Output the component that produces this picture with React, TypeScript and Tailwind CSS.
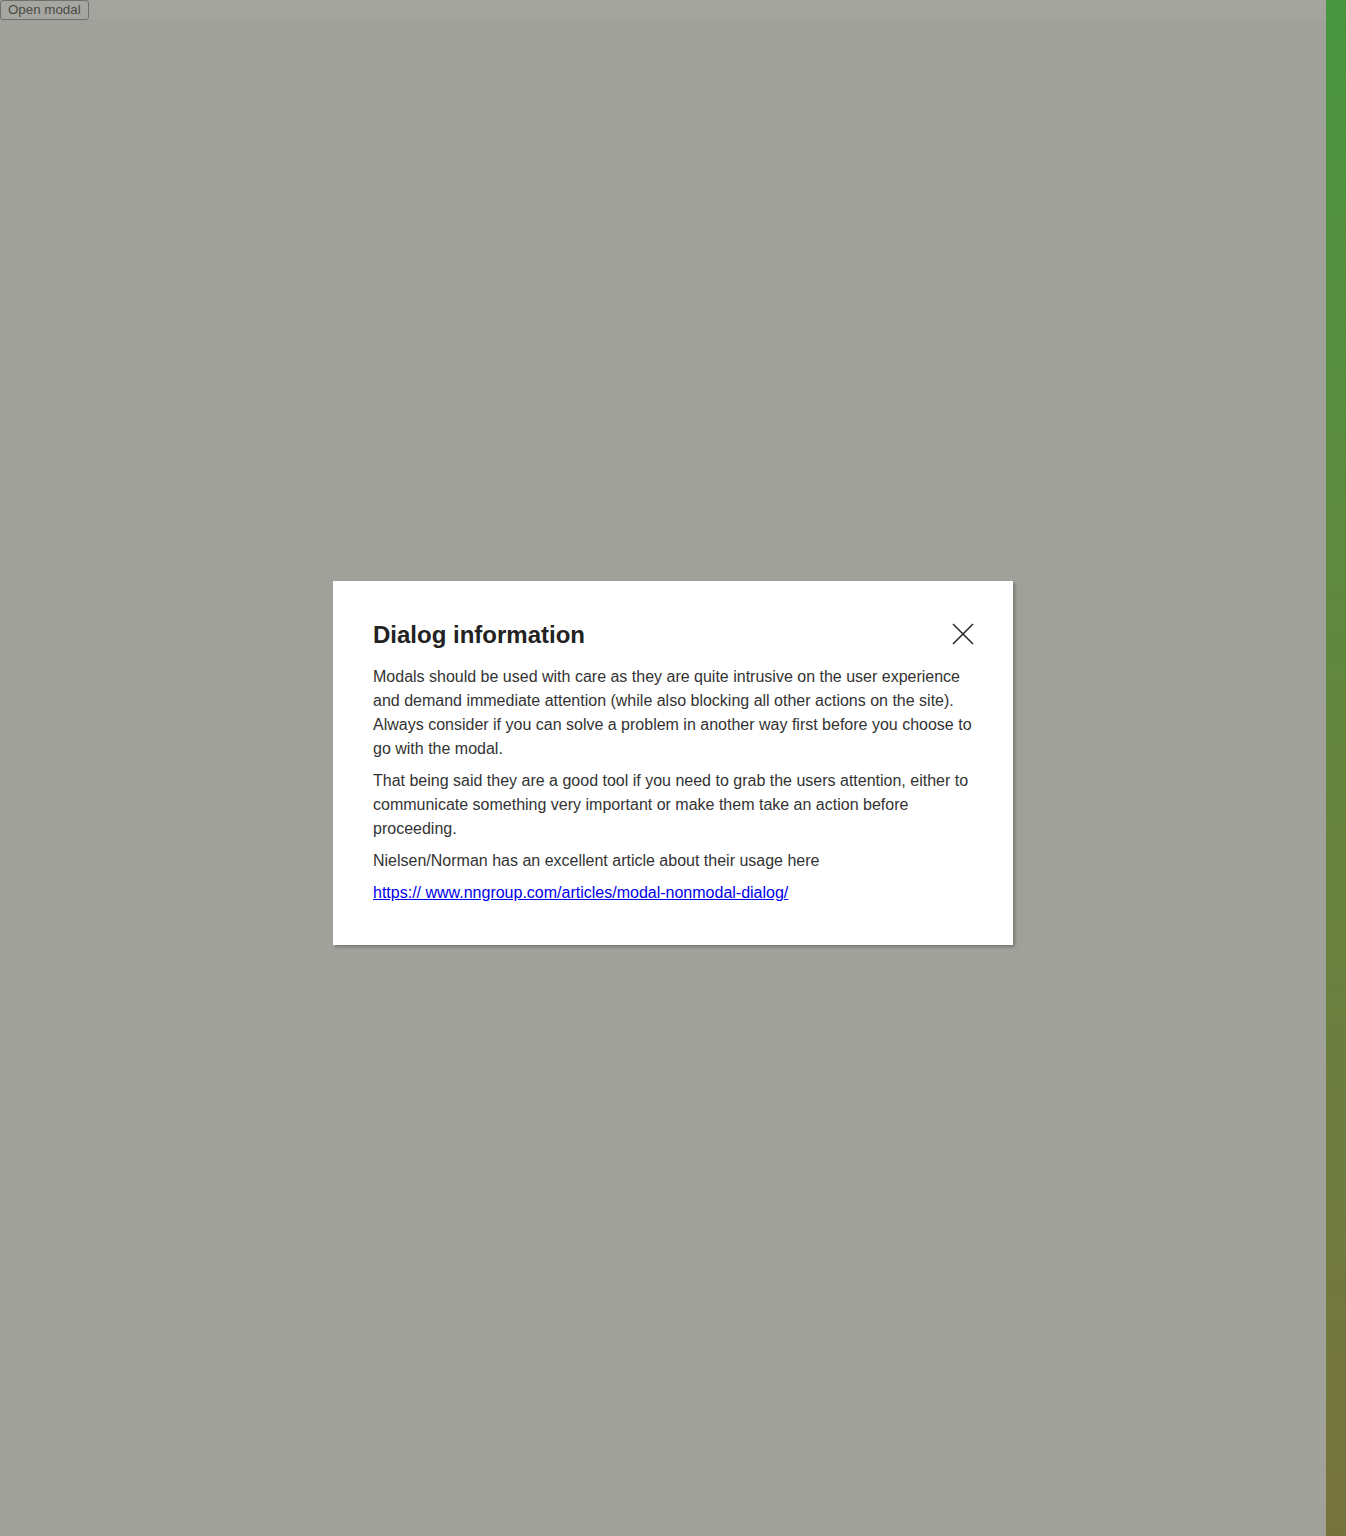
import React from "react";

const CloseIcon = () => (
  <svg width="22" height="22" viewBox="0 0 22 22" fill="none" stroke="#2b2b2b" strokeWidth="1.6">
    <path d="M1 1 L21 21 M21 1 L1 21" />
  </svg>
);

const App = () => {
  return (
    <div className="relative flex h-[1536px] w-full font-['Liberation_Sans',Arial,sans-serif]">
      <main className="flex-1 flex flex-col bg-[#a0a19b]">
        <div className="h-[21px] bg-[#a4a49f] border-b border-[#9d9e98]">
          <button className="block h-[20px] px-[7px] rounded-[3px] border border-[#6f706b] bg-[#a6a6a1] text-[13.33px] leading-[18px] text-[#4a4b46]">
            Open modal
          </button>
        </div>
      </main>
      <aside className="w-[20px] bg-gradient-to-b from-[#48963f] to-[#77733f]" />

      <div className="absolute inset-0 flex items-center justify-center pb-[10px]">
        <section className="w-[680px] bg-white px-[40px] pt-[40px] pb-[40px] shadow-[2px_2px_3px_rgba(0,0,0,0.25)]">
          <div className="flex items-start justify-between mb-[16px]">
            <h2 className="text-[24px] leading-[28px] font-bold text-[#222]">Dialog information</h2>
            <button className="mt-[2px] -mr-[1px]">
              <CloseIcon />
            </button>
          </div>
          <div className="flex flex-col gap-[8px] text-[16px] leading-[24px] text-[#333]">
            <p>
              Modals should be used with care as they are quite intrusive on the user experience and demand
              immediate attention (while also blocking all other actions on the site). Always consider if you can
              solve a problem in another way first before you choose to go with the modal.
            </p>
            <p>
              That being said they are a good tool if you need to grab the users attention, either to communicate
              something very important or make them take an action before proceeding.
            </p>
            <p>Nielsen/Norman has an excellent article about their usage here</p>
            <p>
              <a href="#" className="text-[#0000ee] underline">
                https:// www.nngroup.com/articles/modal-nonmodal-dialog/
              </a>
            </p>
          </div>
        </section>
      </div>
    </div>
  );
};

export default App;
